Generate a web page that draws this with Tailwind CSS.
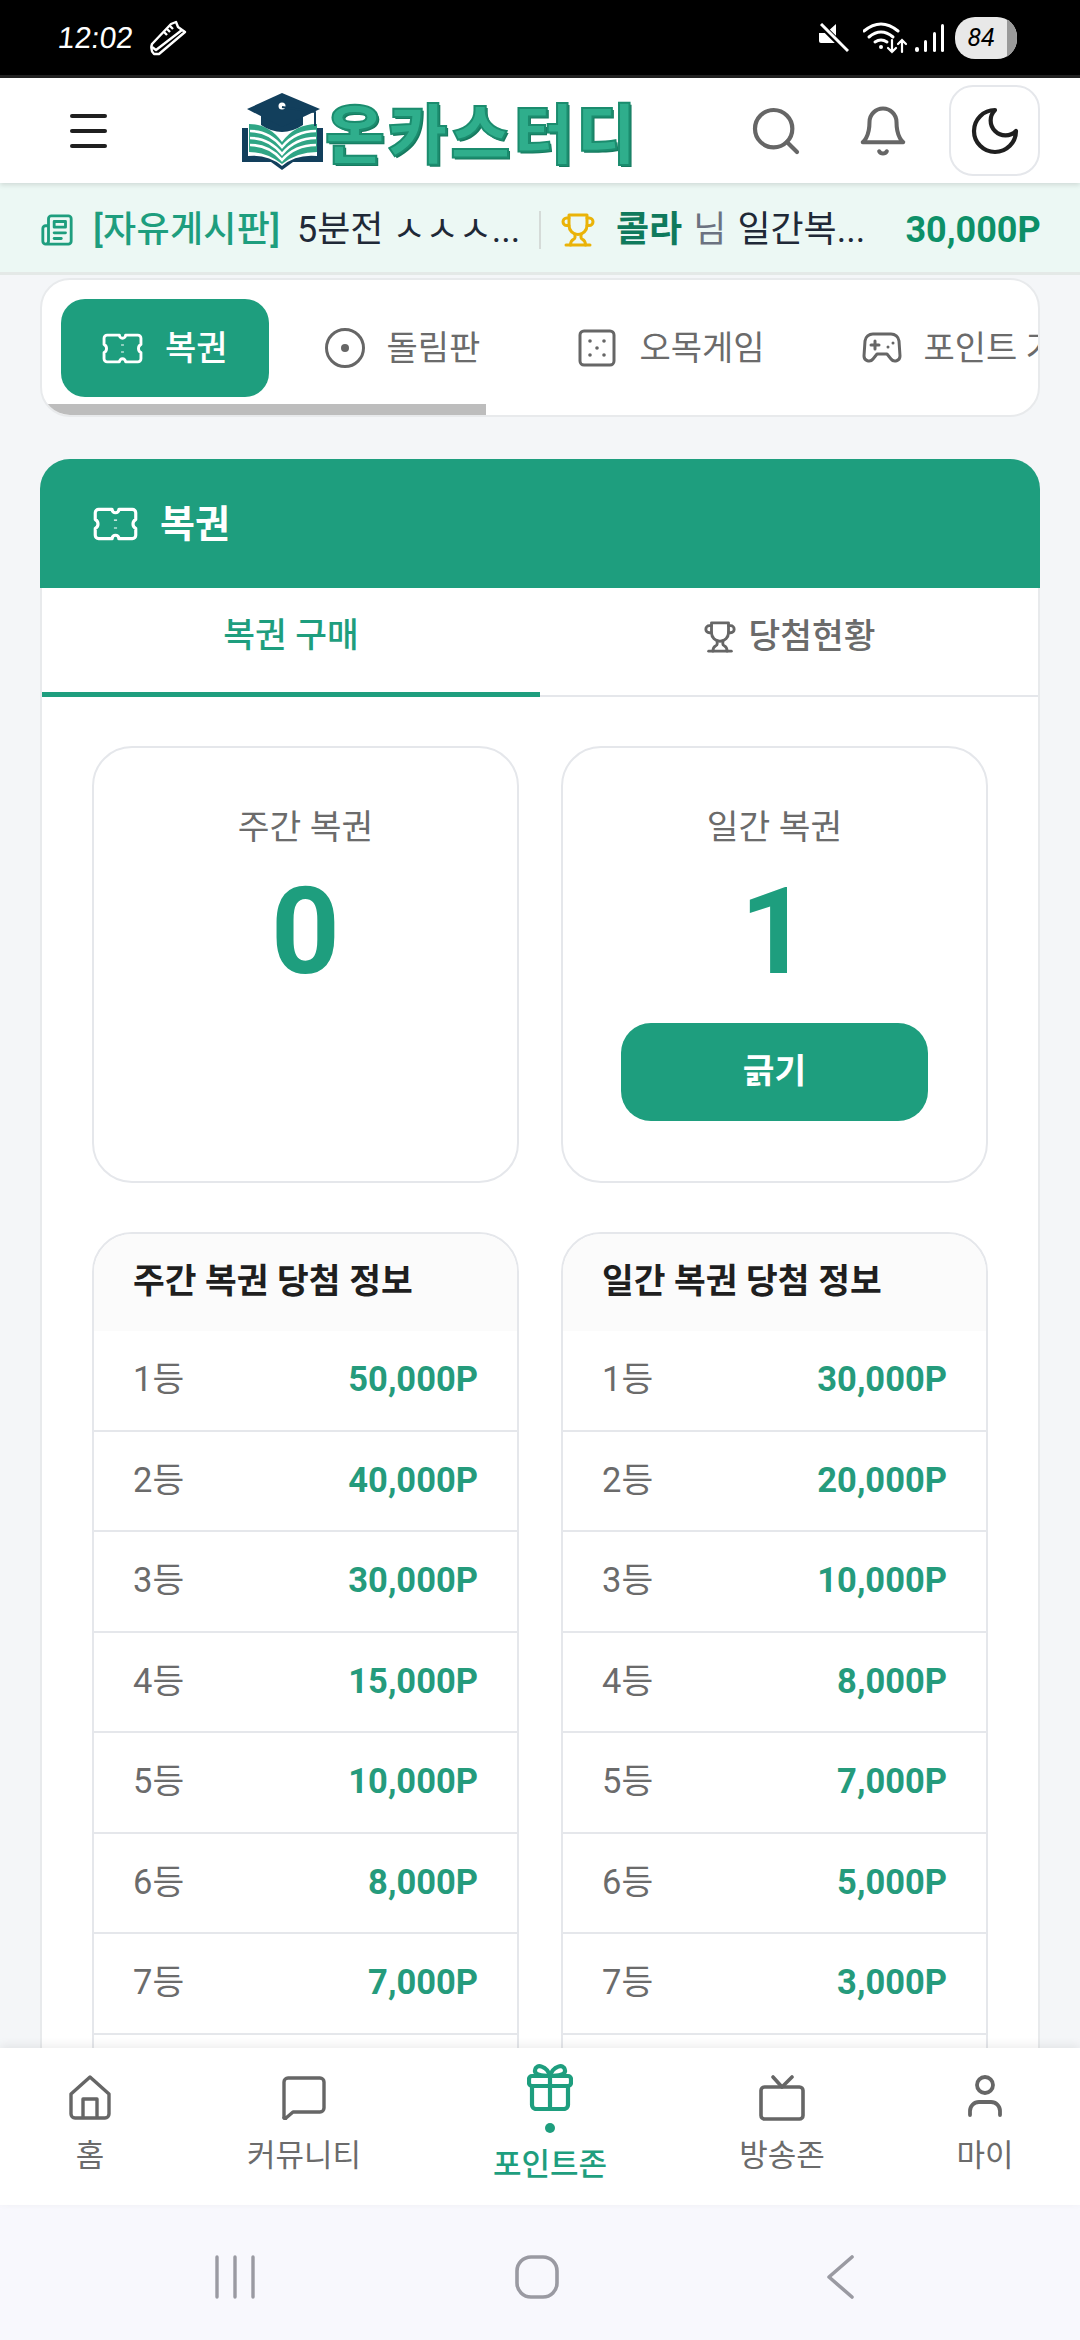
<!DOCTYPE html>
<html lang="ko">
<head>
  <meta charset="UTF-8">
  <meta name="viewport" content="width=device-width, initial-scale=1.0">
  <title>온카스터디 - 복권</title>
  <script src="https://cdn.jsdelivr.net/npm/@tailwindcss/browser@4"></script>
</head>
<body class="bg-[#f4f6f8]">
  <div class="w-[1080px] h-[2340px] flex flex-col overflow-hidden font-['Roboto','Noto_Sans_CJK_KR',sans-serif] text-[#6b6b6b]">

    <!-- status bar -->
    <div class="h-[78px] shrink-0 bg-black border-b-[3px] border-[#222] flex items-center pl-[58px] pr-[63px] text-white">
      <span class="font-['Liberation_Sans',sans-serif] text-[30px] leading-none -skew-x-6">12:02</span>
      <svg class="ml-[16px] w-[38px] h-[36px]" viewBox="0 0 38 36" fill="none" stroke="#fff" stroke-width="2.4" stroke-linejoin="round"><path d="M3 24 L22 4 L27 2 L29 7 L36 12 L10 34 L5 34 Q1 30 3 24Z"/><path d="M3 27 L7 30 L33 10M15 12l3 3M18 9l3 3M21 6l3 3"/></svg>
      <svg class="ml-auto w-[30px] h-[30px]" viewBox="0 0 30 30" fill="#fff"><path d="M0 10h7l10-9v19L8 20H2Q0 20 0 18Z"/><path d="M1 1 L29 29" stroke="#000" stroke-width="6"/><path d="M2 1 L29 28" stroke="#fff" stroke-width="3"/></svg>
      <svg class="ml-[14px] w-[46px] h-[32px]" viewBox="0 0 46 32" fill="none" stroke="#fff" stroke-width="3" stroke-linecap="round"><path d="M1 9 Q18 -5 35 9"/><path d="M6 15 Q18 5 30 15"/><path d="M12 20 Q18 16 24 20"/><circle cx="18" cy="25" r="2" fill="#fff" stroke="none"/><path d="M29 18v12m-4-4 4 4 4-4M39 30V18m-4 4 4-4 4 4" stroke-width="2.2"/></svg>
      <svg class="ml-[6px] w-[30px] h-[30px]" viewBox="0 0 30 30" fill="#fff"><rect x="0" y="24" width="4" height="5" rx="2"/><rect x="9" y="17" width="3" height="12" rx="1.5"/><rect x="18" y="9" width="3" height="20" rx="1.5"/><rect x="26" y="1" width="3" height="28" rx="1.5"/></svg>
      <div class="ml-[10px] w-[62px] h-[42px] rounded-[20px] overflow-hidden bg-[#e8e8e8] flex">
        <span class="flex-1 text-center text-black italic text-[25px] leading-[42px]">84</span>
        <span class="w-[10px] bg-[#9a9a9a]"></span>
      </div>
    </div>

    <!-- header -->
    <header class="h-[105px] shrink-0 bg-white flex items-center relative z-10 shadow-[0_2px_5px_rgba(0,0,0,0.12)]">
      <div class="ml-[70px] w-[37px] flex flex-col gap-[11px]">
        <span class="h-[4px] bg-[#1f1f1f] rounded-sm"></span>
        <span class="h-[4px] bg-[#1f1f1f] rounded-sm"></span>
        <span class="h-[4px] bg-[#1f1f1f] rounded-sm"></span>
      </div>
      <div class="ml-[134px] w-[387px] h-[78px] flex items-center">
        <svg class="w-[84px] h-[78px] shrink-0" viewBox="0 0 84 78">
          <path d="M1 36V70H30L41 78 52 70H82V36H76V64Q55 62 41 74 27 62 7 64V36Z" fill="#123f5c"/>
          <path d="M8 32Q28 32 41 50V72Q26 60 8 60Z" fill="#2fa585"/>
          <path d="M76 32Q54 32 41 50V72Q56 60 76 60Z" fill="#2fa585"/>
          <path d="M9 39Q28 39 41 55 54 39 75 39M9 46Q28 46 41 62 54 46 75 46M9 53Q28 53 41 68 54 53 75 53" fill="none" stroke="#fff" stroke-width="2.6"/>
          <path d="M20 24V33Q41 47 62 33V24Z" fill="#123f5c"/>
          <path d="M6 17 41 1 79 17 41 35Z" fill="#123f5c"/>
          <circle cx="41" cy="14" r="3.5" fill="#fff"/>
          <path d="M41 15 74 20V34" fill="none" stroke="#123f5c" stroke-width="2"/>
        </svg>
        <span class="font-['Noto_Sans_CJK_KR',sans-serif] font-black text-[65px] leading-none tracking-[3px] text-[#2fae8c] whitespace-nowrap [-webkit-text-stroke:2px_#1b8c6e] [text-shadow:2px_2px_0_#167a5f]">온카스터디</span>
      </div>
      <svg class="ml-[120px] w-[56px] h-[56px]" viewBox="0 0 24 24" fill="none" stroke="#666" stroke-width="1.8" stroke-linecap="round"><circle cx="11" cy="11" r="8"/><path d="m21 21-4.3-4.3"/></svg>
      <svg class="ml-[52px] w-[54px] h-[54px]" viewBox="0 0 24 24" fill="none" stroke="#666" stroke-width="1.8" stroke-linecap="round" stroke-linejoin="round"><path d="M6 8a6 6 0 0 1 12 0c0 7 3 9 3 9H3s3-2 3-9"/><path d="M10.3 21a1.94 1.94 0 0 0 3.4 0"/></svg>
      <div class="ml-[39px] w-[91px] h-[91px] rounded-[24px] border-2 border-[#e5e7eb] flex items-center justify-center">
        <svg class="w-[56px] h-[56px]" viewBox="0 0 24 24" fill="none" stroke="#1f1f1f" stroke-width="1.8" stroke-linecap="round" stroke-linejoin="round"><path d="M12 3a6 6 0 0 0 9 9 9 9 0 1 1-9-9Z"/></svg>
      </div>
    </header>

    <!-- ticker -->
    <div class="h-[92px] shrink-0 bg-[#ecf8f4] border-b-[3px] border-[#e4e9e7] flex items-center pl-[40px] pt-[5px] text-[36px] whitespace-nowrap">
      <svg class="w-[34px] h-[34px] shrink-0" viewBox="0 0 24 24" fill="none" stroke="#1e9e7e" stroke-width="2" stroke-linecap="round" stroke-linejoin="round"><path d="M4 22h16a2 2 0 0 0 2-2V4a2 2 0 0 0-2-2H8a2 2 0 0 0-2 2v16a2 2 0 0 1-2 2Zm0 0a2 2 0 0 1-2-2v-9c0-1.1.9-2 2-2h2"/><path d="M18 14h-8"/><path d="M15 18h-5"/><path d="M10 6h8v4h-8V6Z"/></svg>
      <span class="ml-[19px] font-medium text-[#1e9e7e] w-[204px] tracking-[0.3px]">[자유게시판]</span>
      <span class="text-[#1f2937] w-[242px]">5분전 ㅅㅅㅅ...</span>
      <span class="w-[2px] h-[38px] bg-[#d5dbd8]"></span>
      <svg class="ml-[19px] w-[36px] h-[36px] shrink-0" viewBox="0 0 24 24" fill="none" stroke="#eab308" stroke-width="2" stroke-linecap="round" stroke-linejoin="round"><path d="M6 9H4.5a2.5 2.5 0 0 1 0-5H6"/><path d="M18 9h1.5a2.5 2.5 0 0 0 0-5H18"/><path d="M4 22h16"/><path d="M10 14.66V17c0 .55-.47.98-.97 1.21C7.85 18.75 7 20.24 7 22"/><path d="M14 14.66V17c0 .55.47.98.97 1.21C16.15 18.75 17 20.24 17 22"/><path d="M18 2H6v7a6 6 0 0 0 12 0V2Z"/></svg>
      <span class="ml-[20px] font-bold text-[#0f7a5c]">콜라</span>
      <span class="ml-[11px] text-[#6b7280]">님</span>
      <span class="ml-[11px] text-[#1f2937] w-[168px]">일간복...</span>
      <span class="font-bold text-[#0d9068]">30,000P</span>
    </div>

    <!-- content -->
    <main class="flex-1 min-h-0 overflow-hidden px-[40px] pt-[3px]">
      <nav class="relative h-[139px] bg-white border-2 border-[#e8eaec] rounded-[30px] overflow-hidden flex pl-[19px] pt-[19px] gap-[15px] text-[34px] whitespace-nowrap">
        <div class="shrink-0 h-[98px] px-[41px] rounded-[24px] bg-[#1e9e7e] text-white font-medium flex items-center gap-[22px]">
          <svg class="w-[41px] h-[31px]" viewBox="0 0 40 30" fill="none" stroke="#fff" stroke-width="2.8" stroke-linejoin="round"><path d="M5 2h12a3 3 0 0 0 6 0h12a3 3 0 0 1 3 3v6a4.5 4.5 0 0 0 0 8v6a3 3 0 0 1-3 3H23a3 3 0 0 0-6 0H5a3 3 0 0 1-3-3v-6a4.5 4.5 0 0 0 0-8V5a3 3 0 0 1 3-3Z"/><path d="M20 11v1M20 18v1"/></svg>
          <span>복권</span>
        </div>
        <div class="shrink-0 h-[98px] px-[41px] flex items-center gap-[22px]">
          <svg class="w-[40px] h-[40px]" viewBox="0 0 40 40" fill="none" stroke="#666" stroke-width="3"><circle cx="20" cy="20" r="18.5"/><circle cx="20" cy="20" r="4" fill="#666" stroke="none"/></svg>
          <span>돌림판</span>
        </div>
        <div class="shrink-0 h-[98px] px-[41px] flex items-center gap-[22px]">
          <svg class="w-[40px] h-[40px]" viewBox="0 0 40 40" fill="#666"><rect x="3" y="3" width="34" height="34" rx="4" fill="none" stroke="#666" stroke-width="3"/><circle cx="13" cy="13" r="1.8"/><circle cx="27" cy="13" r="1.8"/><circle cx="20" cy="20" r="1.8"/><circle cx="13" cy="27" r="1.8"/><circle cx="27" cy="27" r="1.8"/></svg>
          <span>오목게임</span>
        </div>
        <div class="shrink-0 h-[98px] px-[41px] flex items-center gap-[22px]">
          <svg class="w-[40px] h-[32px]" viewBox="0 0 40 32" fill="none" stroke="#666" stroke-width="3" stroke-linejoin="round" stroke-linecap="round"><path d="M11 2h18a8 8 0 0 1 8 7l1 15a5 5 0 0 1-9 3l-4-5H15l-4 5a5 5 0 0 1-9-3l1-15a8 8 0 0 1 8-7Z"/><path d="M9 13h8M13 9v8"/><path d="M26 15v.1M31 11v.1"/></svg>
          <span>포인트 가챠</span>
        </div>
        <span class="absolute left-0 bottom-0 w-[444px] h-[11px] bg-[#bdbdbd]"></span>
      </nav>

      <section class="mt-[42px] bg-white border-2 border-[#e8eaec] rounded-t-[30px]">
        <div class="-mx-[2px] -mt-[2px] h-[129px] rounded-t-[30px] bg-[#1e9e7e] text-white flex items-center pl-[53px] gap-[22px]">
          <svg class="w-[45px] h-[34px]" viewBox="0 0 40 30" fill="none" stroke="#fff" stroke-width="2.8" stroke-linejoin="round"><path d="M5 2h12a3 3 0 0 0 6 0h12a3 3 0 0 1 3 3v6a4.5 4.5 0 0 0 0 8v6a3 3 0 0 1-3 3H23a3 3 0 0 0-6 0H5a3 3 0 0 1-3-3v-6a4.5 4.5 0 0 0 0-8V5a3 3 0 0 1 3-3Z"/><path d="M20 11v1M20 18v1"/></svg>
          <span class="text-[38px] font-bold leading-none">복권</span>
        </div>

        <div class="h-[109px] flex border-b-2 border-[#e5e7eb] text-[34.5px]">
          <div class="w-1/2 -mb-[2px] border-b-[5px] border-[#1e9e7e] flex items-center justify-center text-[#1e9e7e] font-medium pb-[8px]">복권 구매</div>
          <div class="w-1/2 flex items-center justify-center gap-[12px] font-medium pb-[10px]">
            <svg class="w-[34px] h-[34px]" viewBox="0 0 24 24" fill="none" stroke="#666" stroke-width="2" stroke-linecap="round" stroke-linejoin="round"><path d="M6 9H4.5a2.5 2.5 0 0 1 0-5H6"/><path d="M18 9h1.5a2.5 2.5 0 0 0 0-5H18"/><path d="M4 22h16"/><path d="M10 14.66V17c0 .55-.47.98-.97 1.21C7.85 18.75 7 20.24 7 22"/><path d="M14 14.66V17c0 .55.47.98.97 1.21C16.15 18.75 17 20.24 17 22"/><path d="M18 2H6v7a6 6 0 0 0 12 0V2Z"/></svg>
            <span>당첨현황</span>
          </div>
        </div>

        <div class="px-[50px] pt-[49px] grid grid-cols-2 gap-x-[42px] gap-y-[49px]">
          <div class="h-[437px] border-2 border-[#e5e7eb] rounded-[40px] flex flex-col items-center pt-[55px]">
            <span class="text-[34.5px] leading-[48px]">주간 복권</span>
            <span class="mt-[21px] text-[120px] leading-[120px] font-bold text-[#1e9e7e]">0</span>
          </div>
          <div class="h-[437px] border-2 border-[#e5e7eb] rounded-[40px] flex flex-col items-center pt-[55px]">
            <span class="text-[34.5px] leading-[48px]">일간 복권</span>
            <span class="mt-[21px] text-[120px] leading-[120px] font-bold text-[#1e9e7e]">1</span>
            <button class="mt-[31px] w-[307px] h-[98px] rounded-[30px] bg-[#1e9e7e] text-white text-[34.5px] font-bold">긁기</button>
          </div>

          <div class="border-2 border-[#e5e7eb] rounded-[40px] overflow-hidden text-[34.5px]">
            <div class="h-[97px] bg-[#fbfbfb] flex items-center px-[39px] pb-[2px] font-bold text-[#1f1f1f]">주간 복권 당첨 정보</div>
            <div class="h-[100.5px] flex items-center justify-between px-[39px] border-b-2 border-[#e5e7eb]"><span>1등</span><b class="font-bold text-[#259b7c]">50,000P</b></div>
            <div class="h-[100.5px] flex items-center justify-between px-[39px] border-b-2 border-[#e5e7eb]"><span>2등</span><b class="font-bold text-[#259b7c]">40,000P</b></div>
            <div class="h-[100.5px] flex items-center justify-between px-[39px] border-b-2 border-[#e5e7eb]"><span>3등</span><b class="font-bold text-[#259b7c]">30,000P</b></div>
            <div class="h-[100.5px] flex items-center justify-between px-[39px] border-b-2 border-[#e5e7eb]"><span>4등</span><b class="font-bold text-[#259b7c]">15,000P</b></div>
            <div class="h-[100.5px] flex items-center justify-between px-[39px] border-b-2 border-[#e5e7eb]"><span>5등</span><b class="font-bold text-[#259b7c]">10,000P</b></div>
            <div class="h-[100.5px] flex items-center justify-between px-[39px] border-b-2 border-[#e5e7eb]"><span>6등</span><b class="font-bold text-[#259b7c]">8,000P</b></div>
            <div class="h-[100.5px] flex items-center justify-between px-[39px] border-b-2 border-[#e5e7eb]"><span>7등</span><b class="font-bold text-[#259b7c]">7,000P</b></div>
            <div class="h-[100.5px]"></div>
          </div>
          <div class="border-2 border-[#e5e7eb] rounded-[40px] overflow-hidden text-[34.5px]">
            <div class="h-[97px] bg-[#fbfbfb] flex items-center px-[39px] pb-[2px] font-bold text-[#1f1f1f]">일간 복권 당첨 정보</div>
            <div class="h-[100.5px] flex items-center justify-between px-[39px] border-b-2 border-[#e5e7eb]"><span>1등</span><b class="font-bold text-[#259b7c]">30,000P</b></div>
            <div class="h-[100.5px] flex items-center justify-between px-[39px] border-b-2 border-[#e5e7eb]"><span>2등</span><b class="font-bold text-[#259b7c]">20,000P</b></div>
            <div class="h-[100.5px] flex items-center justify-between px-[39px] border-b-2 border-[#e5e7eb]"><span>3등</span><b class="font-bold text-[#259b7c]">10,000P</b></div>
            <div class="h-[100.5px] flex items-center justify-between px-[39px] border-b-2 border-[#e5e7eb]"><span>4등</span><b class="font-bold text-[#259b7c]">8,000P</b></div>
            <div class="h-[100.5px] flex items-center justify-between px-[39px] border-b-2 border-[#e5e7eb]"><span>5등</span><b class="font-bold text-[#259b7c]">7,000P</b></div>
            <div class="h-[100.5px] flex items-center justify-between px-[39px] border-b-2 border-[#e5e7eb]"><span>6등</span><b class="font-bold text-[#259b7c]">5,000P</b></div>
            <div class="h-[100.5px] flex items-center justify-between px-[39px] border-b-2 border-[#e5e7eb]"><span>7등</span><b class="font-bold text-[#259b7c]">3,000P</b></div>
            <div class="h-[100.5px]"></div>
          </div>
        </div>
      </section>
    </main>

    <!-- bottom nav -->
    <footer class="h-[157px] shrink-0 bg-white relative z-10 flex text-[31px] leading-[48px] whitespace-nowrap shadow-[0_-3px_9px_rgba(0,0,0,0.07)]">
      <div class="w-[180px] flex flex-col items-center pt-[27px]">
        <svg class="w-[44px] h-[45px]" viewBox="0 0 44 45" fill="none" stroke="#666" stroke-width="3.4" stroke-linejoin="round"><path d="M3 19 22 2l19 17v20a4 4 0 0 1-4 4H7a4 4 0 0 1-4-4Z"/><path d="M15 43V24h14v19"/></svg>
        <span class="mt-[12px]">홈</span>
      </div>
      <div class="w-[248px] flex flex-col items-center pt-[27px]">
        <svg class="w-[46px] h-[45px]" viewBox="0 0 46 45" fill="none" stroke="#666" stroke-width="3.4" stroke-linejoin="round"><path d="M7 3h32a4 4 0 0 1 4 4v26a4 4 0 0 1-4 4H12l-7 6a1 1 0 0 1-2-1V7a4 4 0 0 1 4-4Z"/></svg>
        <span class="mt-[12px]">커뮤니티</span>
      </div>
      <div class="w-[244px] flex flex-col items-center pt-[15px] text-[#1e9e7e] font-medium">
        <svg class="w-[46px] h-[48px]" viewBox="0 0 46 48" fill="none" stroke="#1e9e7e" stroke-width="4.2" stroke-linejoin="round"><rect x="2" y="13" width="42" height="10" rx="3"/><path d="M5 23v19a4 4 0 0 0 4 4h28a4 4 0 0 0 4-4V23M23 13v33"/><path d="M23 13c-3-10-14-13-15-6-1 5 7 6 15 6Zm0 0c3-10 14-13 15-6 1 5-7 6-15 6Z"/></svg>
        <span class="mt-[12px] w-[10px] h-[10px] rounded-full bg-[#1e9e7e]"></span>
        <span class="mt-[8px]">포인트존</span>
      </div>
      <div class="w-[220px] flex flex-col items-center pt-[27px]">
        <svg class="w-[46px] h-[46px]" viewBox="0 0 46 46" fill="none" stroke="#666" stroke-width="3.6" stroke-linejoin="round" stroke-linecap="round"><rect x="2" y="12" width="42" height="32" rx="3.5"/><path d="M14 2 23 12 33 2"/></svg>
        <span class="mt-[11px]">방송존</span>
      </div>
      <div class="w-[186px] flex flex-col items-center pt-[27px]">
        <svg class="w-[36px] h-[43px]" viewBox="0 0 36 43" fill="none" stroke="#666" stroke-width="3.8" stroke-linecap="round"><circle cx="18" cy="10" r="8"/><path d="M3 40v-4a9 9 0 0 1 9-9h12a9 9 0 0 1 9 9v4"/></svg>
        <span class="mt-[14px]">마이</span>
      </div>
    </footer>

    <!-- system nav -->
    <div class="h-[135px] shrink-0 bg-[#f8f8fd] flex items-center pt-[8px]">
      <svg class="ml-[215px] w-[40px] h-[44px]" viewBox="0 0 40 44" fill="none" stroke="#9a9aa2" stroke-width="3.4" stroke-linecap="round"><path d="M2 2v40M20 2v40M38 2v40"/></svg>
      <svg class="ml-[260px] w-[44px] h-[44px]" viewBox="0 0 44 44" fill="none" stroke="#9a9aa2" stroke-width="3.6"><rect x="2" y="2" width="40" height="40" rx="14"/></svg>
      <svg class="ml-[267px] w-[28px] h-[44px]" viewBox="0 0 28 44" fill="none" stroke="#9a9aa2" stroke-width="3.6" stroke-linecap="round" stroke-linejoin="round"><path d="M26 2 3 22l23 20"/></svg>
    </div>
  </div>
</body>
</html>
